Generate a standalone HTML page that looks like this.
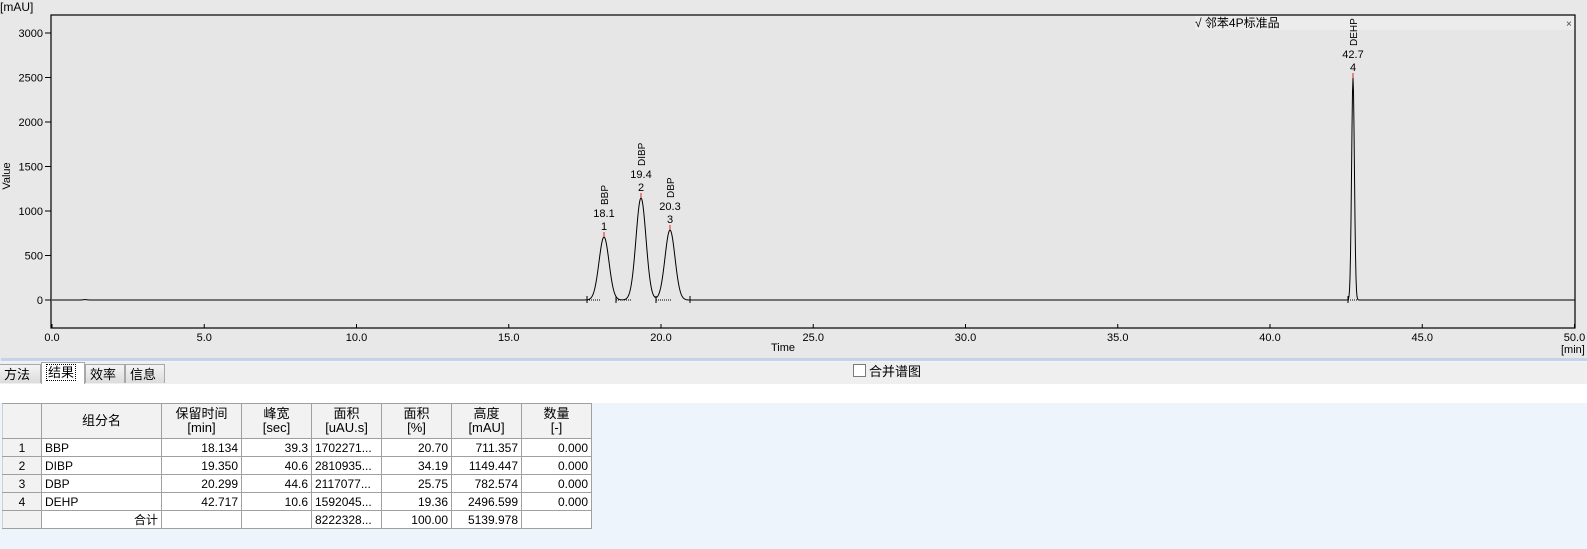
<!DOCTYPE html>
<html><head><meta charset="utf-8"><style>
body{margin:0;width:1587px;height:549px;overflow:hidden;background:#eef4fc;font-family:"Liberation Sans","Noto Sans CJK SC",sans-serif;font-size:12px;color:#000;position:relative}
#chart{position:absolute;left:0;top:0}
.tabbar{position:absolute;left:0;top:362px;width:1587px;height:22px;background:#efefef;border-bottom:1px solid #a0a0a0}
.tab{position:absolute;top:2px;height:19px;background:linear-gradient(#f4f4f4,#dcdcdc);border:1px solid #a8a8a8;border-bottom:none;font-size:13px;line-height:19px;padding-left:4px;box-sizing:border-box}
.tab.sel{background:#fff;top:0;height:22px}
.tab.sel span{border:1px dotted #000;padding:0 1px}
.white{position:absolute;left:0;top:384px;width:1587px;height:19px;background:#fff}
table{position:absolute;left:2px;top:403px;border-collapse:collapse;background:#fff;font-size:12px;table-layout:fixed;width:589px}
td{border:1px solid #a0a0a0;height:17px;padding:0 3px;white-space:nowrap;line-height:16px;overflow:hidden}
tr.h td{height:34px;background:#f2f2f2;text-align:center;line-height:14px;font-size:13px}
td.n{background:#f2f2f2;text-align:center;border-left-color:#d0d0d0}
td.r{text-align:right}
.cb{position:absolute;left:853px;top:364px;width:11px;height:11px;border:1px solid #7a7a7a;background:#fff}
.cbl{position:absolute;left:869px;top:361px;font-size:13px}
</style></head><body>
<svg id="chart" width="1587" height="361" xmlns="http://www.w3.org/2000/svg" font-family="Liberation Sans, sans-serif" font-size="11">
<rect x="0" y="0" width="1587" height="361" fill="#e8e8e8"/>
<rect x="1" y="358" width="1586" height="3" fill="#c4d2ea"/>
<rect x="51" y="15" width="1524" height="313" fill="#e6e6e6" stroke="#000" stroke-width="1.2"/>
<rect x="1195" y="16" width="379" height="14" fill="#ececec"/>
<text x="0" y="11" font-size="12">[mAU]</text>
<text x="1195" y="27" font-size="12" font-family="Liberation Sans, Noto Sans CJK SC, sans-serif">√ 邻苯4P标准品</text>
<text x="1566" y="27" font-size="10" fill="#444">×</text>
<g id="yax"></g><g id="xax"></g>
<text transform="translate(10,176) rotate(-90)" text-anchor="middle" font-size="11">Value</text>
<text x="783" y="351" text-anchor="middle">Time</text>
<text x="1561" y="353" font-size="11">[min]</text>
<path id="sig" fill="none" stroke="#000" stroke-width="1"/>
<g id="lab"></g>
</svg>
<div class="tabbar">
<div class="tab" style="left:0;width:41px;border-left:none">方法</div>
<div class="tab sel" style="left:41px;width:44px"><span>结果</span></div>
<div class="tab" style="left:85px;width:40px">效率</div>
<div class="tab" style="left:125px;width:40px">信息</div>
</div>
<div class="cb"></div><div class="cbl">合并谱图</div>
<div class="white"></div>
<table>
<colgroup><col style="width:39px"><col style="width:120px"><col style="width:80px"><col style="width:70px"><col style="width:70px"><col style="width:70px"><col style="width:70px"><col style="width:70px"></colgroup>
<tr class="h"><td class="n"></td><td>组分名</td><td>保留时间<br>[min]</td><td>峰宽<br>[sec]</td><td>面积<br>[uAU.s]</td><td>面积<br>[%]</td><td>高度<br>[mAU]</td><td>数量<br>[-]</td></tr>
<tr><td class="n">1</td><td>BBP</td><td class="r">18.134</td><td class="r">39.3</td><td>1702271...</td><td class="r">20.70</td><td class="r">711.357</td><td class="r">0.000</td></tr>
<tr><td class="n">2</td><td>DIBP</td><td class="r">19.350</td><td class="r">40.6</td><td>2810935...</td><td class="r">34.19</td><td class="r">1149.447</td><td class="r">0.000</td></tr>
<tr><td class="n">3</td><td>DBP</td><td class="r">20.299</td><td class="r">44.6</td><td>2117077...</td><td class="r">25.75</td><td class="r">782.574</td><td class="r">0.000</td></tr>
<tr><td class="n">4</td><td>DEHP</td><td class="r">42.717</td><td class="r">10.6</td><td>1592045...</td><td class="r">19.36</td><td class="r">2496.599</td><td class="r">0.000</td></tr>
<tr><td class="n"></td><td class="r">合计</td><td></td><td></td><td>8222328...</td><td class="r">100.00</td><td class="r">5139.978</td><td></td></tr>
</table>
<script>
var ns="http://www.w3.org/2000/svg";
function el(p,t,a,txt){var e=document.createElementNS(ns,t);for(var k in a)e.setAttribute(k,a[k]);if(txt!=null)e.textContent=txt;p.appendChild(e);return e;}
var ya=document.getElementById('yax');
for(var v=0;v<=3000;v+=500){var y=300-v*0.089;el(ya,'line',{x1:45,x2:51,y1:y,y2:y,stroke:'#000'});el(ya,'text',{x:43,y:y+4,'text-anchor':'end'},String(v));}
var xa=document.getElementById('xax');
for(var t=0;t<=50;t+=5){var x=52+t*30.45;el(xa,'line',{x1:x,x2:x,y1:324,y2:328,stroke:'#000'});el(xa,'text',{x:x,y:341,'text-anchor':'middle'},t.toFixed(1));}
var pk=[[604,63,5],[641,102,5],[670,70,5],[1353,222,1.4],[85,0.4,2]];
var d="";
for(var x=52;x<=1575;x+=0.5){var h=0;pk.forEach(function(p){h+=p[1]*Math.exp(-Math.pow((x-p[0])/p[2],2)/2);});d+=(x==52?"M":"L")+x+" "+(300-h).toFixed(2);}
document.getElementById('sig').setAttribute('d',d);
var lab=document.getElementById('lab');
var L=[[604,237,'BBP','18.1','1'],[641,198,'DIBP','19.4','2'],[670,230,'DBP','20.3','3'],[1353,78,'DEHP','42.7','4']];
L.forEach(function(l){var x=l[0],y=l[1];
el(lab,'line',{x1:x,x2:x,y1:y-5,y2:y,stroke:'#e02020'});
el(lab,'text',{x:x,y:y-7,'text-anchor':'middle'},l[4]);
el(lab,'text',{x:x,y:y-20,'text-anchor':'middle'},l[3]);
el(lab,'text',{transform:'translate('+(x+4)+','+(y-32)+') rotate(-90)','font-size':'10'},l[2]);});
[[587,601],[616,631],[656,672],[690,704],[1348,1358]].forEach(function(b){el(lab,'line',{x1:b[0],x2:b[1],y1:300,y2:300,stroke:'#000','stroke-dasharray':'1,1'});el(lab,'line',{x1:b[0],x2:b[0],y1:296,y2:303,stroke:'#000'});});
</script>
</body></html>
